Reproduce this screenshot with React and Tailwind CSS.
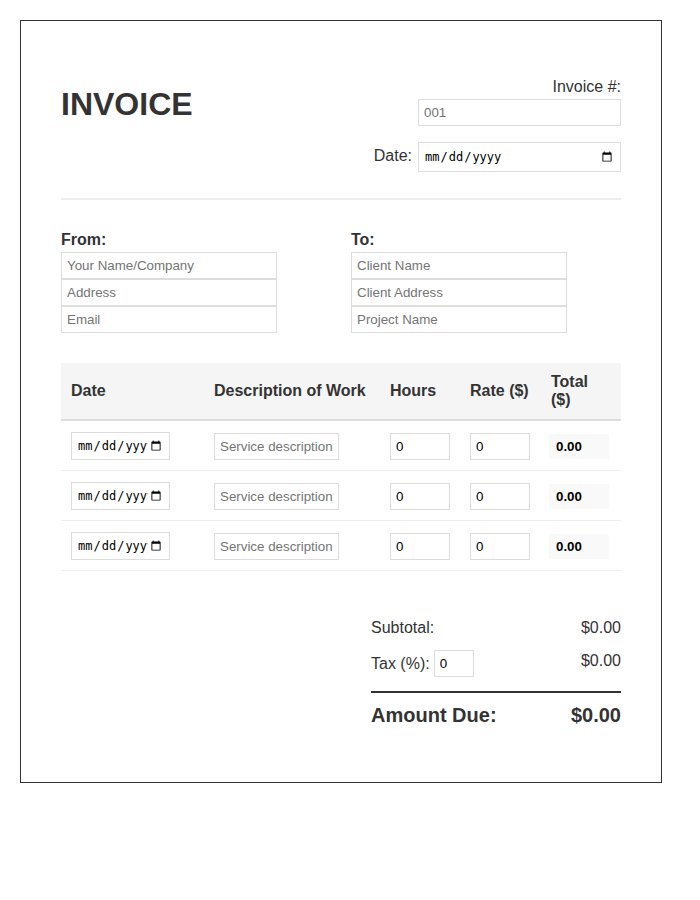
import { useState } from 'react'

const field =
  'block border border-[#ddd] px-[5px] py-[5px] text-[13.333px] leading-[15px] text-[#333] bg-white outline-none placeholder:text-[#757575]'
const dateField =
  'border border-[#ddd] px-[5px] text-[12px] text-black bg-white outline-none font-["DejaVu_Sans_Mono",monospace]'

const rows = [1, 2, 3]

export default function App() {
  const [tax, setTax] = useState('0')

  return (
    <div className="min-h-screen bg-white p-5 font-['Liberation_Sans',Arial,sans-serif] text-[#333]">
      <div className="w-[642px] border border-[#333] px-10 pt-10 pb-[55px]">
        {/* Header */}
        <div className="flex justify-between items-start border-b-2 border-[#eee] pb-[26px]">
          <h1 className="mt-[25px] text-[32px] leading-[37px] font-bold">INVOICE</h1>
          <div className="mt-[17px] flex flex-col items-end">
            <label className="text-base leading-[18px]">Invoice #:</label>
            <input className={field + ' mt-[3px] w-[203px]'} placeholder="001" />
            <div className="mt-4 flex items-center gap-[6px]">
              <label className="text-base leading-[18px] -mt-[3px]">Date:</label>
              <input type="date" className={dateField + ' w-[203px] h-[30px]'} />
            </div>
          </div>
        </div>

        {/* From / To */}
        <div className="mt-[31px] grid grid-cols-2 gap-5">
          <div>
            <div className="mb-[3px] text-base leading-[18px] font-bold">From:</div>
            <input className={field + ' w-[216px]'} placeholder="Your Name/Company" />
            <input className={field + ' w-[216px]'} placeholder="Address" />
            <input className={field + ' w-[216px]'} placeholder="Email" />
          </div>
          <div>
            <div className="mb-[3px] text-base leading-[18px] font-bold">To:</div>
            <input className={field + ' w-[216px]'} placeholder="Client Name" />
            <input className={field + ' w-[216px]'} placeholder="Client Address" />
            <input className={field + ' w-[216px]'} placeholder="Project Name" />
          </div>
        </div>

        {/* Line items */}
        <table className="mt-[30px] w-full border-collapse table-fixed">
          <colgroup>
            <col className="w-[143px]" />
            <col className="w-[176px]" />
            <col className="w-[80px]" />
            <col className="w-[81px]" />
            <col className="w-[80px]" />
          </colgroup>
          <thead>
            <tr className="bg-[#f5f5f5] border-b-2 border-[#ddd]">
              <th className="p-[10px] text-left text-base leading-[18px] font-bold">Date</th>
              <th className="p-[10px] text-left text-base leading-[18px] font-bold">Description of Work</th>
              <th className="p-[10px] text-left text-base leading-[18px] font-bold">Hours</th>
              <th className="p-[10px] text-left text-base leading-[18px] font-bold">Rate ($)</th>
              <th className="p-[10px] text-left text-base leading-[18px] font-bold">Total ($)</th>
            </tr>
          </thead>
          <tbody>
            {rows.map((r) => (
              <tr key={r} className="border-b border-[#eee]">
                <td className="px-[10px] pt-[11px] pb-[11px] align-middle first:pb-[10px]">
                  <input type="date" className={dateField + ' w-[99px] h-[28px]'} />
                </td>
                <td className="px-[10px] pt-[11px] pb-[10px] align-middle">
                  <input className={field + ' w-[125px]'} placeholder="Service description" />
                </td>
                <td className="px-[10px] pt-[11px] pb-[10px] align-middle">
                  <input type="number" defaultValue="0" className={field + ' w-[60px] text-black'} />
                </td>
                <td className="px-[10px] pt-[11px] pb-[10px] align-middle">
                  <input type="number" defaultValue="0" className={field + ' w-[60px] text-black'} />
                </td>
                <td className="pl-[8px] pr-[10px] pt-[11px] pb-[10px] align-middle">
                  <input
                    readOnly
                    value="0.00"
                    className="block w-[60px] bg-[#f9f9f9] px-[7px] py-[5px] text-[13.333px] leading-[15px] font-bold text-black outline-none"
                  />
                </td>
              </tr>
            ))}
          </tbody>
        </table>

        {/* Totals */}
        <div className="mt-[48px] ml-auto w-[250px]">
          <div className="mb-[13px] flex justify-between text-base leading-[18px]">
            <span>Subtotal:</span>
            <span>$0.00</span>
          </div>
          <div className="mb-[14px] flex justify-between text-base leading-[18px]">
            <div className="flex items-center gap-[4px]">
              <span>Tax (%):</span>
              <input
                type="number"
                value={tax}
                onChange={(e) => setTax(e.target.value)}
                className={field + ' w-[40px] text-black'}
              />
            </div>
            <span className="pt-[2px]">$0.00</span>
          </div>
          <div className="flex justify-between border-t-2 border-[#333] pt-[11px] text-xl leading-[23px] font-bold">
            <span>Amount Due:</span>
            <span>$0.00</span>
          </div>
        </div>
      </div>
    </div>
  )
}
